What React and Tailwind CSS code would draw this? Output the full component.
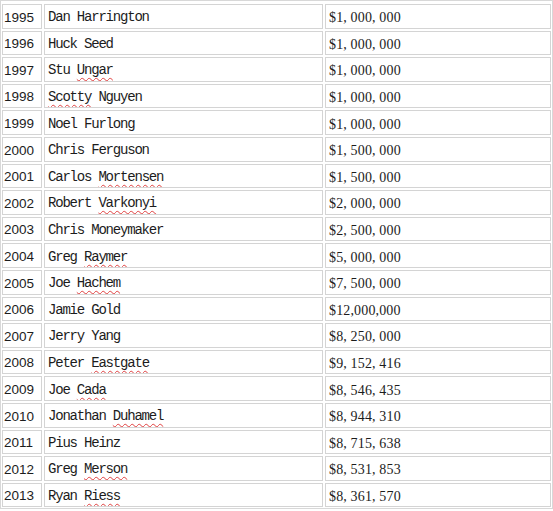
import React from "react";

const rows = [
  ["1995", [["Dan Harrington", false]], "$1, 000, 000"],
  ["1996", [["Huck Seed", false]], "$1, 000, 000"],
  ["1997", [["Stu ", false], ["Ungar", true]], "$1, 000, 000"],
  ["1998", [["Scotty", true], [" Nguyen", false]], "$1, 000, 000"],
  ["1999", [["Noel Furlong", false]], "$1, 000, 000"],
  ["2000", [["Chris Ferguson", false]], "$1, 500, 000"],
  ["2001", [["Carlos ", false], ["Mortensen", true]], "$1, 500, 000"],
  ["2002", [["Robert ", false], ["Varkonyi", true]], "$2, 000, 000"],
  ["2003", [["Chris Moneymaker", false]], "$2, 500, 000"],
  ["2004", [["Greg ", false], ["Raymer", true]], "$5, 000, 000"],
  ["2005", [["Joe ", false], ["Hachem", true]], "$7, 500, 000"],
  ["2006", [["Jamie Gold", false]], "$12,000,000"],
  ["2007", [["Jerry Yang", false]], "$8, 250, 000"],
  ["2008", [["Peter ", false], ["Eastgate", true]], "$9, 152, 416"],
  ["2009", [["Joe ", false], ["Cada", true]], "$8, 546, 435"],
  ["2010", [["Jonathan ", false], ["Duhamel", true]], "$8, 944, 310"],
  ["2011", [["Pius Heinz", false]], "$8, 715, 638"],
  ["2012", [["Greg ", false], ["Merson", true]], "$8, 531, 853"],
  ["2013", [["Ryan ", false], ["Riess", true]], "$8, 361, 570"],
];

const cell =
  "border border-[#d4d4d4] flex items-center pt-[3px] text-[#1c1c1c] whitespace-pre overflow-hidden";

export default function App() {
  return (
    <div className="w-[553px] h-[511px] bg-white">
      <div className="border border-[#d8d8d8] px-px pt-[3px] pb-px grid grid-cols-[40px_279px_1fr] auto-rows-[24.6px] gap-[2px] w-[553px]">
        {rows.map(([y, name, amt]) => (
          <React.Fragment key={y}>
            <div
              className={cell + " pl-[1px] text-[13.5px]"}
              style={{ fontFamily: '"Liberation Sans", Arial, sans-serif' }}
            >
              {y}
            </div>
            <div
              className={cell + " pl-[3px] text-[14px] tracking-[-1.2px] font-medium"}
              style={{ fontFamily: '"Liberation Mono", "Courier New", monospace' }}
            >
              {name.map(([t, err], i) =>
                err ? (
                  <span
                    key={i}
                    className="underline decoration-wavy decoration-[#e04040] decoration-1 underline-offset-[3px]"
                  >
                    {t}
                  </span>
                ) : (
                  <span key={i}>{t}</span>
                )
              )}
            </div>
            <div
              className={cell + " pl-[3px] text-[14px] tracking-[0.15px]"}
              style={{ fontFamily: '"Liberation Serif", "Times New Roman", serif' }}
            >
              {amt}
            </div>
          </React.Fragment>
        ))}
      </div>
    </div>
  );
}
